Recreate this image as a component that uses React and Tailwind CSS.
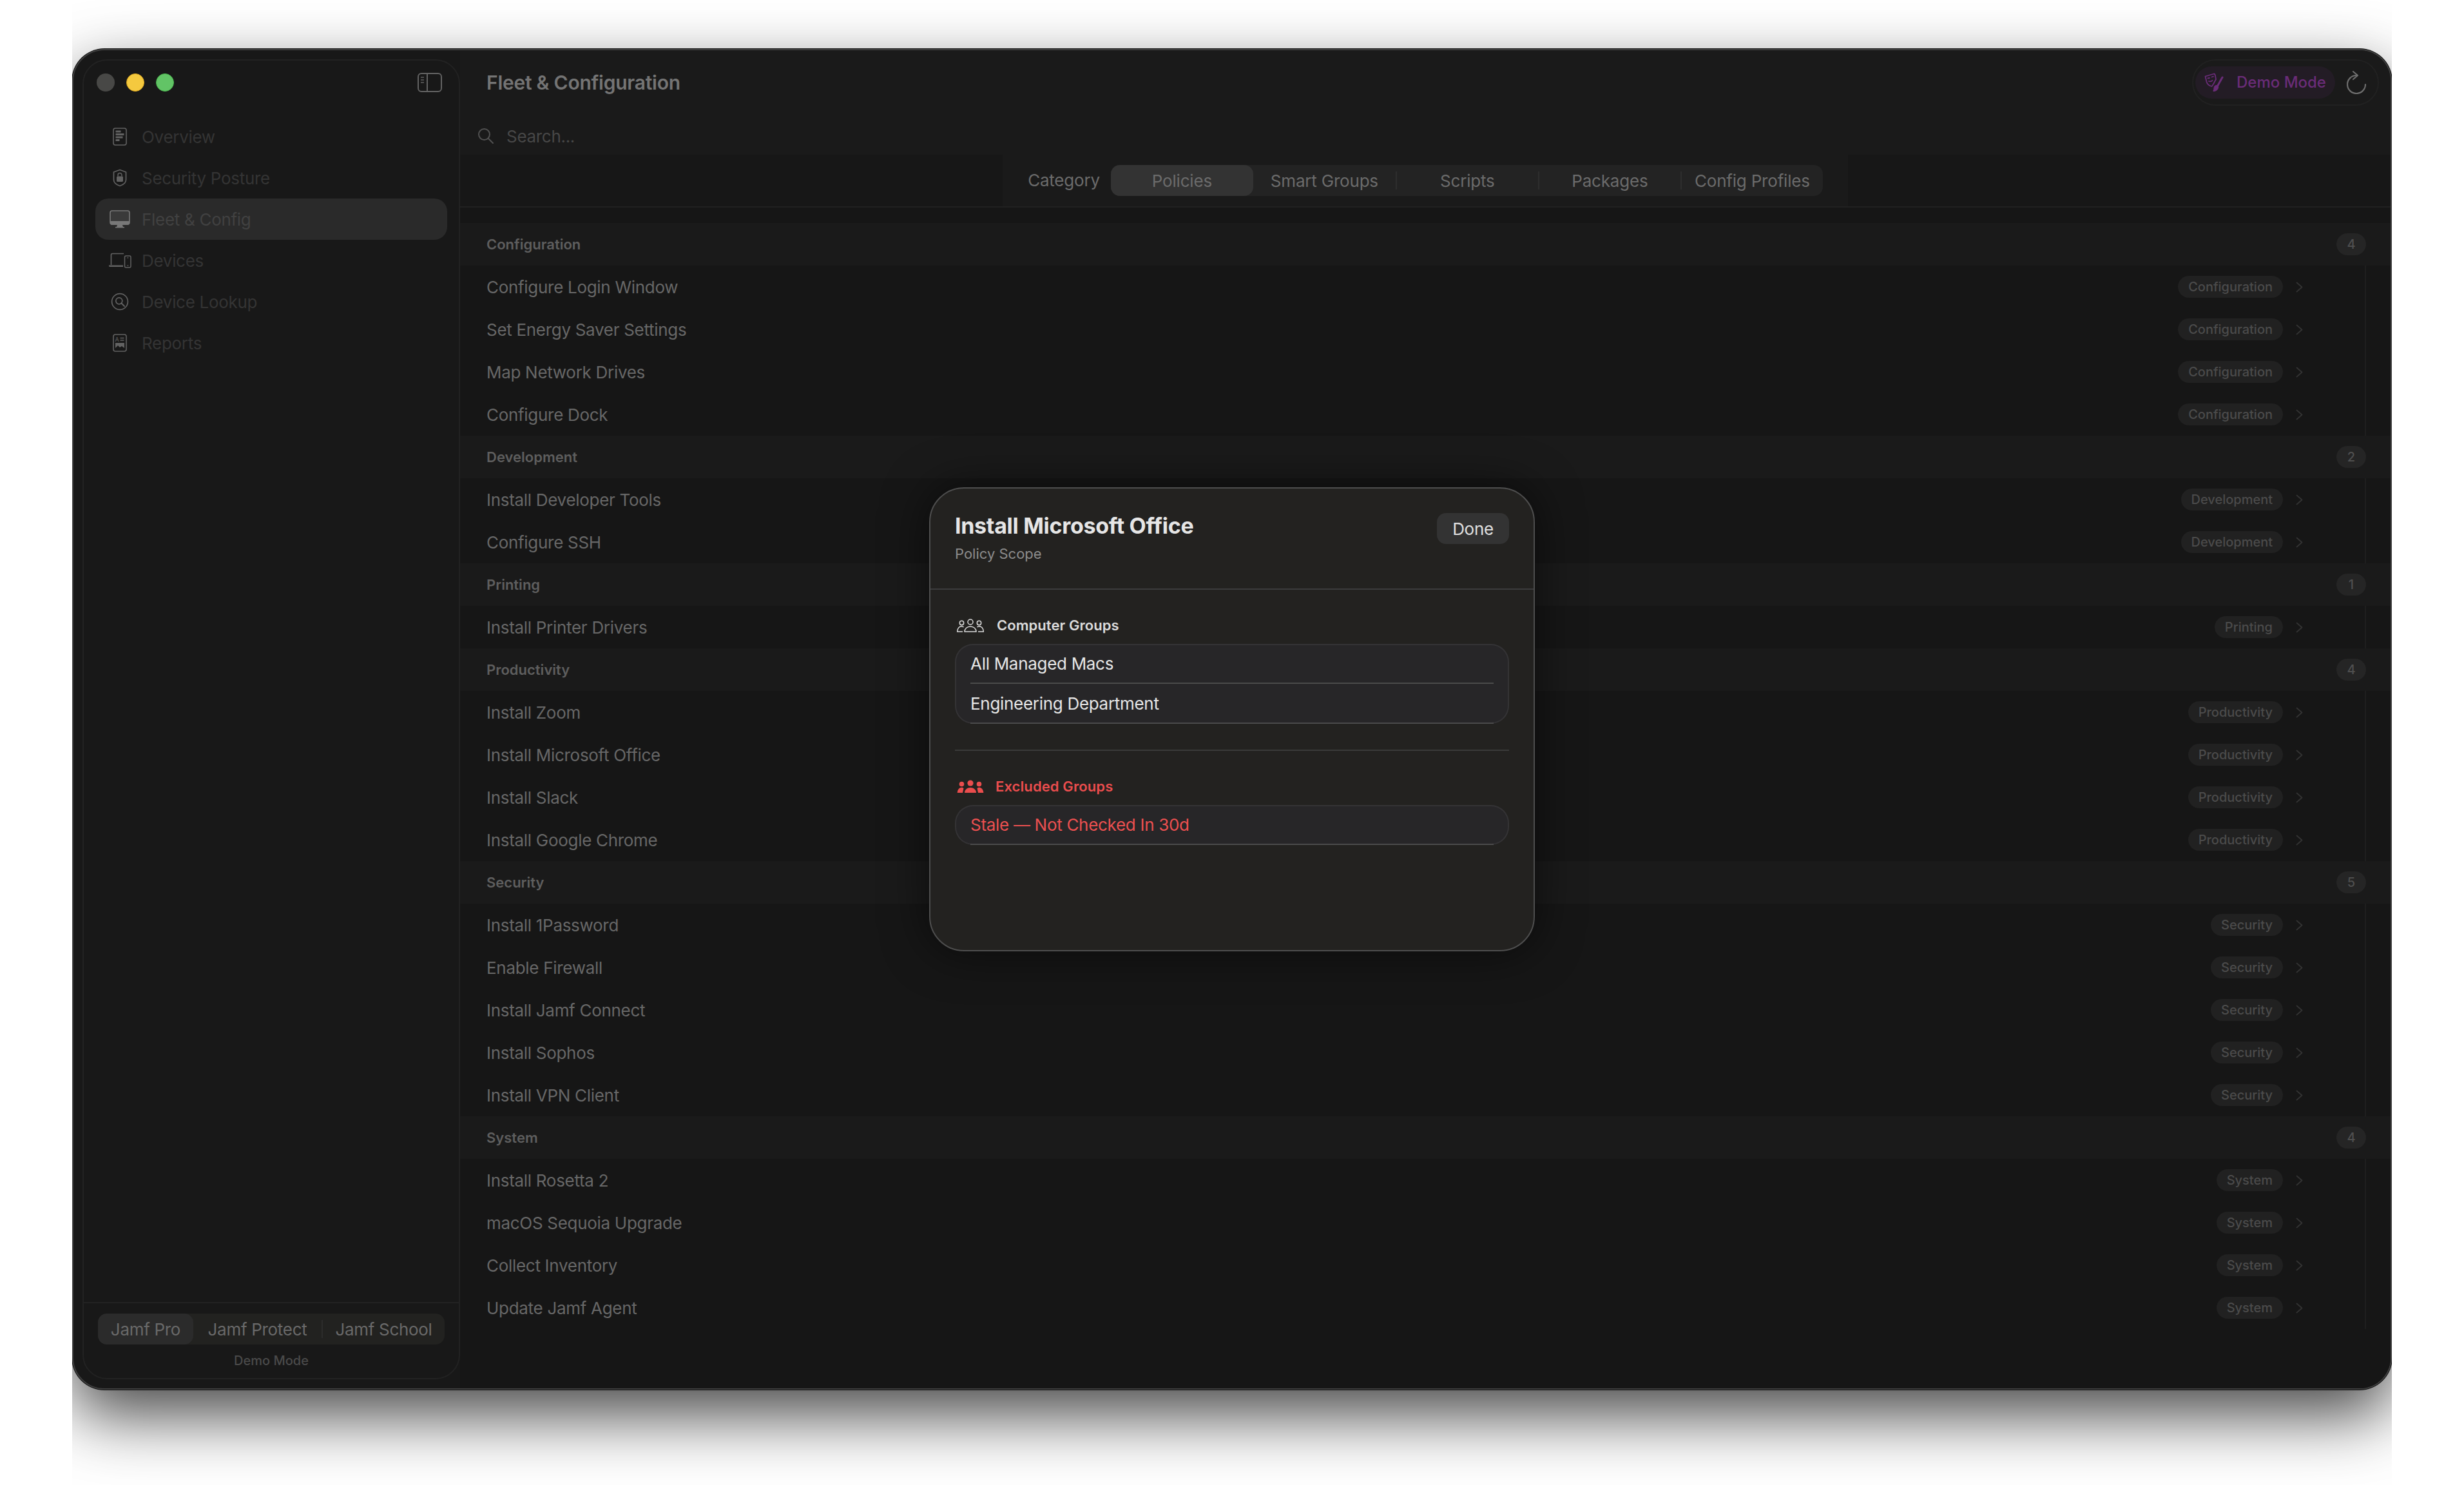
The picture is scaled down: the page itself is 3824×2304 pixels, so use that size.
const sections = [
  { name: "Configuration", items: ["Configure Login Window", "Set Energy Saver Settings", "Map Network Drives", "Configure Dock"] },
  { name: "Development", items: ["Install Developer Tools", "Configure SSH"] },
  { name: "Printing", items: ["Install Printer Drivers"] },
  { name: "Productivity", items: ["Install Zoom", "Install Microsoft Office", "Install Slack", "Install Google Chrome"] },
  { name: "Security", items: ["Install 1Password", "Enable Firewall", "Install Jamf Connect", "Install Sophos", "Install VPN Client"] },
  { name: "System", items: ["Install Rosetta 2", "macOS Sequoia Upgrade", "Collect Inventory", "Update Jamf Agent"] },
];

const OverviewIcon = () => (
  <svg width="22" height="28" viewBox="0 0 22 28" fill="none">
    <rect x="1" y="1" width="20" height="26" rx="3" stroke="#626262" strokeWidth="1.6" />
    <path d="M4.500 4.500h8v3h-8zM4.500 9h13v3h-13zM4.500 13.500h11v3h-11zM4.500 18h6v3h-6z" fill="#626262" />
  </svg>
);

const ShieldIcon = () => (
  <svg width="22" height="28" viewBox="0 0 22 28" fill="none">
    <path d="M11 1.500 20.500 5v12c0 4-4 7.500-9.500 9.500C5.500 24.500 1.500 21 1.500 17V5z" stroke="#626262" strokeWidth="1.700" strokeLinejoin="round" />
    <rect x="6" y="11.500" width="10" height="8.500" rx="1.500" fill="#626262" />
    <path d="M8 11.500V9.500a3 3 0 0 1 6 0v2" stroke="#626262" strokeWidth="1.500" />
  </svg>
);

const MonitorIcon = () => (
  <svg width="32" height="28" viewBox="0 0 32 28" fill="none">
    <rect x="1" y="1" width="30" height="21" rx="3" fill="#3a3a3a" stroke="#787878" strokeWidth="1.600" />
    <path d="M1 17h30v3a3 3 0 0 1-3 3H4a3 3 0 0 1-3-3z" fill="#787878" />
    <path d="M12 23h8l1 3h2v1.500H9V26h2z" fill="#787878" />
  </svg>
);

const DevicesIcon = () => (
  <svg width="36" height="24" viewBox="0 0 36 24" fill="none">
    <path d="M4.500 19V3.500a2 2 0 0 1 2-2H24" stroke="#626262" strokeWidth="1.700" />
    <path d="M1 19.500h22v2.500H2.500A1.500 1.500 0 0 1 1 20.500z" fill="#626262" />
    <rect x="25.500" y="5" width="9.500" height="18" rx="2" stroke="#626262" strokeWidth="1.500" />
    <path d="M29 8h2.500M29 20h2.500" stroke="#626262" strokeWidth="1.200" />
  </svg>
);

const LookupIcon = () => (
  <svg width="28" height="28" viewBox="0 0 28 28" fill="none">
    <circle cx="14" cy="14" r="12.400" stroke="#626262" strokeWidth="1.700" />
    <circle cx="12.800" cy="12.800" r="5" stroke="#626262" strokeWidth="1.700" />
    <path d="m16.500 16.500 4.500 4.500" stroke="#626262" strokeWidth="1.900" strokeLinecap="round" />
  </svg>
);

const ReportsIcon = () => (
  <svg width="22" height="28" viewBox="0 0 22 28" fill="none">
    <rect x="1" y="1" width="20" height="26" rx="3" stroke="#626262" strokeWidth="1.600" />
    <text x="3.500" y="12" fontSize="9" fontFamily="Inter, sans-serif" fill="#626262">A</text>
    <path d="M11.500 6.500h6M11.500 10h6" stroke="#626262" strokeWidth="1.300" />
    <path d="M4 14h14v8l-4-3-3 2-3-3-4 4z" fill="#626262" />
  </svg>
);

const navItems = [
  { label: "Overview", Icon: OverviewIcon },
  { label: "Security Posture", Icon: ShieldIcon },
  { label: "Fleet & Config", Icon: MonitorIcon, active: true },
  { label: "Devices", Icon: DevicesIcon },
  { label: "Device Lookup", Icon: LookupIcon },
  { label: "Reports", Icon: ReportsIcon },
];

const MaskIcon = () => (
  <svg width="30" height="30" viewBox="0 0 30 30" fill="none" stroke="#6a2c78" strokeWidth="1.800" strokeLinecap="round" strokeLinejoin="round">
    <path d="M1.500 5.500 15 1.500c1 .2 1.500.8 1.800 2l1.200 6.500-4 7.500-2.500 3.500c-4-1-7-3.500-8-7z" />
    <path d="M5.500 8.500 8 8M11.500 6.500l2.500-.8M7 13c2 .8 4 .3 5.500-1.200" />
    <path d="m28 7-7 12.500" strokeWidth="3" />
    <path d="M17.500 20c2-1 4 .2 3.800 2.500-.2 3-3.800 6-7 5.500 1.500-1.500.8-3 1-4.500.2-1.500 1-3 2.200-3.500z" fill="#6a2c78" />
  </svg>
);

const RefreshIcon = () => (
  <svg width="30" height="36" viewBox="0 0 30 36" fill="none" stroke="#6e6e6e" strokeWidth="2.200" strokeLinecap="round" strokeLinejoin="round">
    <path d="M15 7A14 14 0 1 0 29 21" />
    <path d="m10 1 7 6-7 6" />
  </svg>
);

const SidebarToggle = () => (
  <svg width="38" height="30" viewBox="0 0 38 30" fill="none" stroke="#626262" strokeWidth="2">
    <rect x="1" y="1" width="36" height="28" rx="5" />
    <path d="M15 1v28" />
    <path d="M5 7h5M5 11h5M5 15h5" strokeWidth="1.500" />
  </svg>
);

const Chevron = () => (
  <svg width="11" height="17" viewBox="0 0 11 17" fill="none" stroke="#333333" strokeWidth="1.800" strokeLinecap="round" strokeLinejoin="round">
    <path d="m1.500 1.500 8 7-8 7" />
  </svg>
);

const People = ({ filled }) => {
  const color = filled ? "#ea4d4d" : "#dcdcdc";
  const paint = filled
    ? { fill: color, stroke: "none" }
    : { fill: "none", stroke: color, strokeWidth: 1.5 };
  return (
    <svg width="42" height="21" viewBox="0 0 42 21">
      <circle cx="21" cy="5" r={filled ? 4.6 : 4} {...paint} />
      <circle cx="7.500" cy="6.500" r={filled ? 3.800 : 3.200} {...paint} />
      <circle cx="34.500" cy="6.500" r={filled ? 3.800 : 3.200} {...paint} />
      <path d="M12 20c0-4.500 4-8 9-8s9 3.500 9 8z" {...paint} />
      <path d="M10.500 13c-1-1-2-1.300-3-1.300-3.500 0-6.500 3-6.800 8.300H9" {...paint} />
      <path d="M31.500 13c1-1 2-1.300 3-1.300 3.500 0 6.500 3 6.800 8.300H33" {...paint} />
    </svg>
  );
};

const ScopeList = ({ items, red }) => (
  <div className="rounded-[28px] bg-[#272628] px-6 shadow-[inset_0_0_0_2px_#343335]">
    {items.map((name) => (
      <div
        key={name}
        className={`flex h-[62px] items-center border-b-2 border-[#4b4b4b] text-[26px] tracking-[-0.3px] ${red ? "text-[#ec5050]" : "text-[#e6e6e6]"}`}
      >
        {name}
      </div>
    ))}
  </div>
);

const Sidebar = () => (
  <aside className="my-[14px] ml-[14px] flex w-[586px] flex-col rounded-[38px] border-2 border-[#222222]">
    <div className="flex h-[68px] items-center pl-5 pr-[26px]">
      <div className="flex gap-[18px]">
        <span className="h-7 w-7 rounded-full bg-[#484846]" />
        <span className="h-7 w-7 rounded-full border border-[#e0a91f] bg-[#f4c93f]" />
        <span className="h-7 w-7 rounded-full border border-[#4bb84f] bg-[#62c466]" />
      </div>
      <div className="ml-auto flex">
        <SidebarToggle />
      </div>
    </div>
    <nav className="mx-[18px] mt-[18px] flex-1">
      {navItems.map(({ label, Icon, active }) => (
        <div
          key={label}
          className={`flex h-16 items-center gap-4 rounded-[20px] pl-5 text-[26px] tracking-[-0.3px] ${active ? "bg-[#2a2a2a] text-[#414141]" : "text-[#343434]"}`}
        >
          <span className="flex w-9 justify-center">
            <Icon />
          </span>
          {label}
        </div>
      ))}
    </nav>
    <div className="h-[118px] border-t-2 border-[#222222] px-[22px] pt-4">
      <div className="flex h-12 items-center rounded-[14px] bg-[#222220] text-[26px] tracking-[-0.3px] text-[#696969]">
        <span className="flex h-full w-[148px] items-center justify-center rounded-[14px] bg-[#2b2b2b]">Jamf Pro</span>
        <span className="flex h-full w-[199px] items-center justify-center">Jamf Protect</span>
        <span className="h-7 w-0.5 bg-[#2c2c2c]" />
        <span className="flex h-full flex-1 items-center justify-center">Jamf School</span>
      </div>
      <p className="mt-[10px] text-center text-[20px] font-medium leading-[30px] text-[#4a4a4a]">Demo Mode</p>
    </div>
  </aside>
);

const Toolbar = () => (
  <>
    <div className="flex h-[100px] items-center pl-[41px] pr-[18px]">
      <h1 className="text-[30px] font-semibold tracking-[-0.25px] text-[#747474]">Fleet &amp; Configuration</h1>
      <div className="ml-auto flex h-[72px] w-[290px] items-center rounded-full border-2 border-[#212121] pl-[3px]">
        <div className="flex h-[50px] w-[217px] items-center gap-[20px] rounded-full bg-[#231c25] pl-[14px] text-[24px] font-medium text-[#6a2c78]">
          <MaskIcon />
          Demo Mode
        </div>
        <span className="ml-[18px] flex">
          <RefreshIcon />
        </span>
      </div>
    </div>
    <div className="flex h-[62px] items-center gap-[19px] pl-[27px] pt-1 text-[26px] tracking-[-0.3px] text-[#474747]">
      <svg width="26" height="26" viewBox="0 0 26 26" fill="none" stroke="#515151" strokeWidth="2" strokeLinecap="round">
        <circle cx="10.500" cy="10.500" r="8.500" />
        <path d="m17 17 7 7" />
      </svg>
      Search...
    </div>
    <div className="flex h-[82px] justify-center border-b-2 border-[#212121] bg-[#171717]">
      <div className="flex w-[1312px] justify-center gap-[17px] bg-[#1a1a1a] pt-4 text-[26px] tracking-[-0.2px] text-[#6b6b6b]">
        <span className="leading-[48px]">Category</span>
        <div className="flex h-12 rounded-[14px] bg-[#232323]">
          {["Policies", "Smart Groups", "Scripts", "Packages", "Config Profiles"].map((tab, i) => (
            <div key={tab} className="flex items-center">
              {i > 1 && <span className="h-7 w-0.5 bg-[#2e2e2e]" />}
              <span className={`flex h-12 items-center justify-center ${i === 0 ? "rounded-[14px] bg-[#333333]" : ""} ${i > 1 ? "w-[219px]" : "w-[221px]"}`}>
                {tab}
              </span>
            </div>
          ))}
        </div>
      </div>
    </div>
  </>
);

const PolicyList = () => (
  <div className="flex-1 bg-[#161616] pt-6">
    {sections.map((section) => (
      <section key={section.name}>
        <div className="flex h-[66px] items-center justify-between bg-[#1a1a1a] pl-[41px] pr-[38px]">
          <span className="text-[22px] font-semibold text-[#5e5e5e]">{section.name}</span>
          <span className="flex h-[34px] w-[46px] items-center justify-center rounded-full bg-[#252525] text-[20px] font-medium text-[#4f4f4f]">
            {section.items.length}
          </span>
        </div>
        <div className="mr-[38px] border-r-2 border-[#1f1f1f]">
          {section.items.map((item) => (
            <div key={item} className="flex h-[66px] items-center pl-[41px] pr-[96px] text-[26px] tracking-[-0.3px] text-[#676767]">
              <span>{item}</span>
              <span className="ml-auto flex h-[34px] items-center rounded-full bg-[#212121] px-4 text-[20px] font-medium tracking-normal text-[#4b4b4b]">
                {section.name}
              </span>
              <span className="ml-5 flex">
                <Chevron />
              </span>
            </div>
          ))}
        </div>
      </section>
    ))}
  </div>
);

const ScopeModal = () => (
  <div className="absolute left-1/2 top-1/2 h-[720px] w-[940px] -translate-x-1/2 -translate-y-1/2 rounded-[54px] border-2 border-[#4e4e4e] bg-[#232220] shadow-[0_0_70px_rgba(0,0,0,0.55)]">
    <div className="flex h-[157px] items-start justify-between border-b-2 border-[#3c3c3c] px-[38px] pt-[37px]">
      <div>
        <h2 className="text-[34px] font-bold leading-[42px] tracking-[-0.3px] text-[#e6e6e6]">Install Microsoft Office</h2>
        <p className="mt-2 text-[22px] leading-7 text-[#8c8c8c]">Policy Scope</p>
      </div>
      <button className="mt-px h-12 w-[112px] rounded-[14px] bg-[#333333] text-[26px] tracking-[-0.3px] text-[#e0e0e0]">Done</button>
    </div>
    <div className="px-[38px] pt-10">
      <div className="mb-[14px] flex h-[30px] items-center gap-5 pl-[3px] text-[22px] font-semibold tracking-[0.05px] text-[#dcdcdc]">
        <People />
        Computer Groups
      </div>
      <ScopeList items={["All Managed Macs", "Engineering Department"]} />
      <div className="my-10 h-0.5 bg-[#3a3a3a]" />
      <div className="mb-[14px] flex h-[30px] items-center gap-[18px] pl-[3px] text-[22px] font-semibold tracking-[0.1px] text-[#ea4d4d]">
        <People filled />
        Excluded Groups
      </div>
      <ScopeList items={["Stale — Not Checked In 30d"]} red />
    </div>
  </div>
);

export default function App() {
  return (
    <div className="h-[2304px] w-[3824px] bg-white px-[112px] font-['Inter','Noto_Sans',sans-serif]">
      <div className="h-[2304px] overflow-hidden pt-[76px]">
        <div className="relative flex h-[2080px] rounded-[50px] border-2 border-[#3f3f3f] bg-[#181818] shadow-[0_0_0_1px_#0c0c0c,0_40px_100px_rgba(0,0,0,0.72)]">
          <Sidebar />
          <main className="flex flex-1 flex-col overflow-hidden rounded-r-[48px] bg-[#1a1a1a]">
            <Toolbar />
            <PolicyList />
          </main>
          <ScopeModal />
        </div>
      </div>
    </div>
  );
}
